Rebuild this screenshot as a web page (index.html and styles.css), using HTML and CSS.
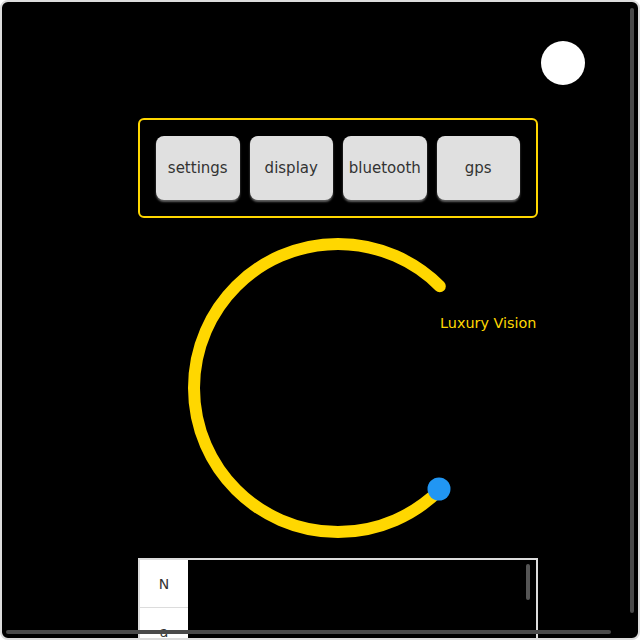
FILE: index.html
```html
<!DOCTYPE html>
<html>
<head>
<meta charset="utf-8">
<link rel="stylesheet" href="styles.css">
</head>
<body>
<div class="frame">
  <div class="content">
    <div class="top-row">
      <div class="dot"></div>
    </div>
    <div class="panel">
      <button class="btn">settings</button>
      <button class="btn">display</button>
      <button class="btn">bluetooth</button>
      <button class="btn">gps</button>
    </div>
    <svg class="dial" width="400" height="320" viewBox="0 0 400 320">
      <path d="M 301.82 60.18 A 144 144 0 1 0 301.82 263.82" fill="none" stroke="#ffd700" stroke-width="12" stroke-linecap="round"/>
      <circle cx="301" cy="263" r="11.5" fill="#2196f3"/>
      <text x="302" y="102" class="dial-label">Luxury Vision</text>
    </svg>
    <div class="table">
      <div class="col">
        <div class="cell">N</div>
        <div class="cell">a</div>
      </div>
      <div class="pane"></div>
      <div class="inner-scroll"></div>
    </div>
  </div>
  <div class="vscroll"></div>
  <div class="hscroll"></div>
</div>
</body>
</html>
```
FILE: styles.css
```css
html, body {
  margin: 0;
  padding: 0;
  background: #ffffff;
}
body {
  font-family: "DejaVu Sans", sans-serif;
}
.frame {
  position: relative;
  box-sizing: border-box;
  width: 640px;
  height: 640px;
  border: 2px solid #dcdcdc;
  border-radius: 8px;
  background: #000;
  overflow: hidden;
}
.content {
  padding-top: 39px;
  padding-left: 136px;
}
.top-row {
  display: flex;
  justify-content: flex-end;
  padding-right: 53px;
  margin-left: -136px;
}
.dot {
  width: 44px;
  height: 44px;
  border-radius: 50%;
  background: #fff;
}
.panel {
  box-sizing: border-box;
  width: 400px;
  height: 100px;
  margin-top: 33px;
  border: 2px solid #ffd700;
  border-radius: 6px;
  padding: 16px;
  display: flex;
  gap: 10px;
}
.btn {
  flex: 1;
  height: 64px;
  border: none;
  border-radius: 8px;
  background: #e0e0e0;
  color: #333;
  font-family: "DejaVu Sans", sans-serif;
  font-size: 15px;
  padding: 0;
  box-shadow: 0 2px 2px rgba(120, 120, 120, 0.8);
}
.dial {
  display: block;
  margin-top: 8px;
}
.dial-label {
  fill: #ffd700;
  font-family: "DejaVu Sans", sans-serif;
  font-size: 14.4px;
}
.table {
  position: relative;
  box-sizing: border-box;
  width: 400px;
  height: 120px;
  margin-top: 12px;
  border: 2px solid #dcdcdc;
  display: flex;
}
.col {
  width: 48px;
  background: #fff;
}
.cell {
  height: 47px;
  border-bottom: 1px solid #dcdcdc;
  display: flex;
  align-items: center;
  justify-content: center;
  font-size: 14px;
  color: #333;
}
.pane {
  flex: 1;
  background: #000;
}
.inner-scroll {
  position: absolute;
  right: 6px;
  top: 4px;
  width: 4px;
  height: 36px;
  border-radius: 2px;
  background: #555;
}
.vscroll {
  position: absolute;
  right: 4px;
  top: 6px;
  width: 4px;
  height: 605px;
  border-radius: 2px;
  background: #4a4a4a;
}
.hscroll {
  position: absolute;
  left: 4px;
  top: 628px;
  width: 605px;
  height: 4px;
  border-radius: 2px;
  background: #4a4a4a;
}
```
